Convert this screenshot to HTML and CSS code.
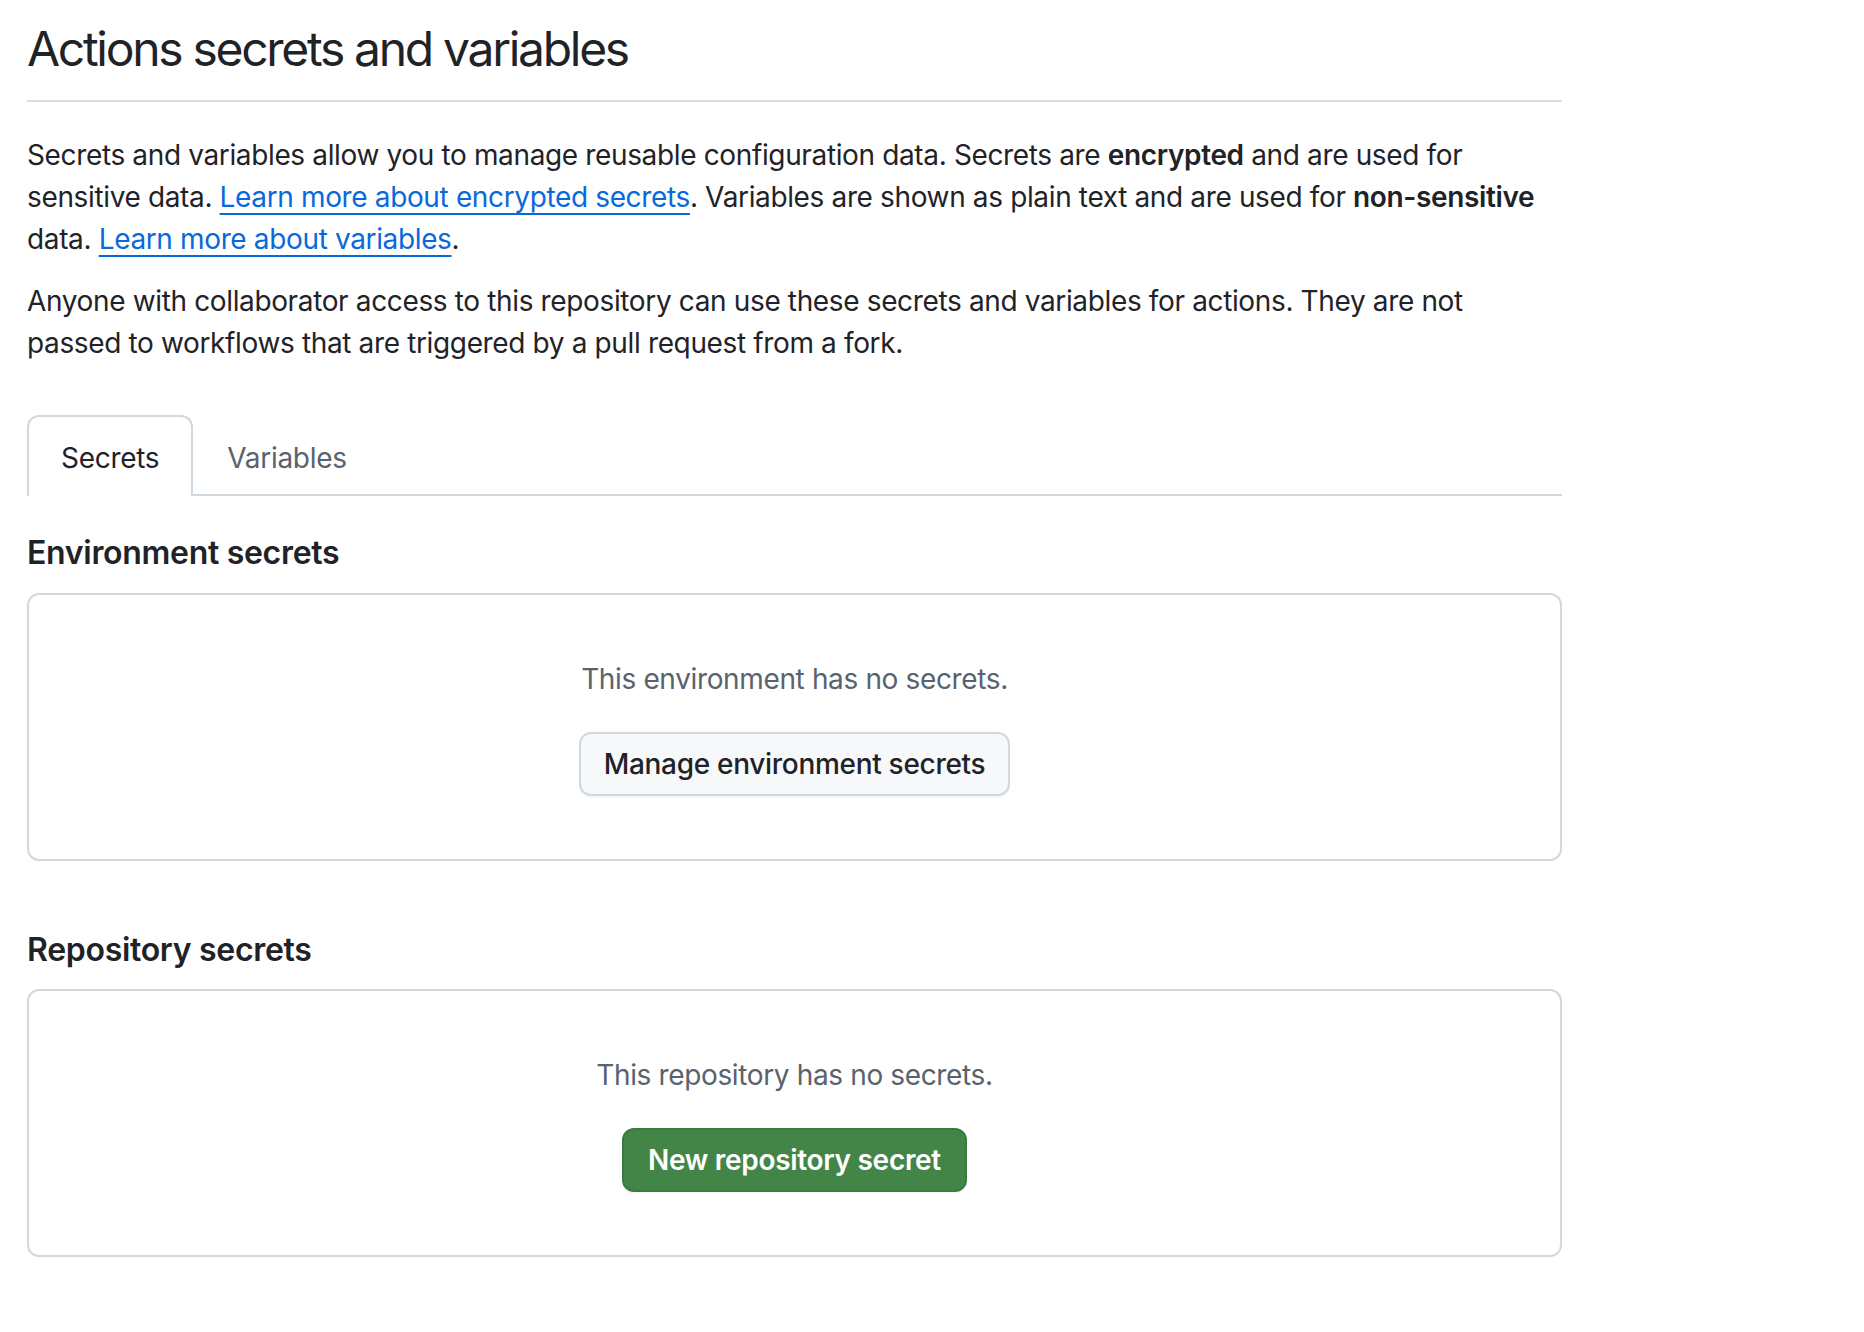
FILE: index.html
```html
<!DOCTYPE html>
<html lang="en">
<head>
<meta charset="utf-8">
<title>Actions secrets and variables</title>
<link rel="stylesheet" href="styles.css">
</head>
<body>
<main class="page">
  <div class="subhead">
    <h2 class="subhead-heading">Actions secrets and variables</h2>
  </div>
  <p class="intro">Secrets and variables allow you to manage reusable configuration data. Secrets are <strong>encrypted</strong> and are used for sensitive data. <a href="#" class="link">Learn more about encrypted secrets</a>. Variables are shown as plain text and are used for <strong class="nowrap">non-sensitive</strong> data. <a href="#" class="link">Learn more about variables</a>.</p>
  <p class="intro">Anyone with collaborator access to this repository can use these secrets and variables for actions. They are not passed to workflows that are triggered by a pull request from a fork.</p>

  <nav class="tabnav">
    <a href="#" class="tab tab-selected">Secrets</a>
    <a href="#" class="tab">Variables</a>
  </nav>

  <section class="group">
    <h3 class="group-heading">Environment secrets</h3>
    <div class="blankslate">
      <p class="blankslate-text">This environment has no secrets.</p>
      <button class="btn">Manage environment secrets</button>
    </div>
  </section>

  <section class="group group-second">
    <h3 class="group-heading">Repository secrets</h3>
    <div class="blankslate">
      <p class="blankslate-text">This repository has no secrets.</p>
      <button class="btn btn-primary">New repository secret</button>
    </div>
  </section>
</main>
</body>
</html>
```
FILE: styles.css
```css
* { box-sizing: border-box; }

body {
  margin: 0;
  background: #ffffff;
  color: #1f2328;
  font-family: Inter, "Noto Sans", "Liberation Sans", sans-serif;
  font-size: 28px;
  line-height: 42px;
  letter-spacing: -0.36px;
}

.page {
  width: 1535px;
  margin-left: 27px;
  padding-top: 19px;
}

.subhead {
  border-bottom: 2px solid #d8dee4;
  padding-bottom: 21px;
  margin-bottom: 32px;
}

.subhead-heading {
  margin: 0;
  font-size: 48px;
  line-height: 60px;
  font-weight: 400;
  letter-spacing: -2.3px;
}

.intro {
  margin: 0 0 20px 0;
}

strong { font-weight: 600; }

.nowrap { white-space: nowrap; }

.link {
  color: #0969da;
  text-decoration: underline;
  text-underline-offset: 6px;
  text-decoration-thickness: 2px;
}

.tabnav {
  display: flex;
  margin-top: 51px;
  border-bottom: 2px solid #d1d9e0;
}

.tab {
  display: block;
  padding: 0 32px;
  height: 79px;
  line-height: 82px;
  font-size: 28px;
  letter-spacing: -0.3px;
  color: #59636e;
  text-decoration: none;
  border: 2px solid transparent;
  border-bottom: 0;
  border-radius: 12px 12px 0 0;
  margin-bottom: -2px;
}

.tab-selected {
  color: #1f2328;
  background: #ffffff;
  border-color: #d1d9e0;
  height: 81px;
}

.group {
  margin-top: 37px;
}

.group-second {
  margin-top: 69px;
}

.group-heading {
  margin: 0 0 19px 0;
  font-size: 32px;
  line-height: 40px;
  font-weight: 600;
  letter-spacing: -0.3px;
}

.group:first-of-type .group-heading {
  margin-bottom: 20px;
}

.blankslate {
  border: 2px solid #d1d9e0;
  border-radius: 12px;
  height: 268px;
  padding-top: 63px;
  display: flex;
  flex-direction: column;
  align-items: center;
}

.blankslate-text {
  margin: 0;
  color: #59636e;
}

.btn {
  margin-top: 32px;
  height: 64px;
  padding: 0 23px;
  font-family: inherit;
  font-size: 28px;
  font-weight: 500;
  letter-spacing: -0.3px;
  color: #1f2328;
  background: #f6f8fa;
  border: 2px solid #d1d9e0;
  border-radius: 12px;
  box-shadow: 0 2px 0 rgba(31, 35, 40, 0.04);
  cursor: pointer;
}

.btn-primary {
  padding: 0 24px;
  color: #ffffff;
  background: #438547;
  border-color: #3b7a3f;
  font-weight: 600;
}
```
